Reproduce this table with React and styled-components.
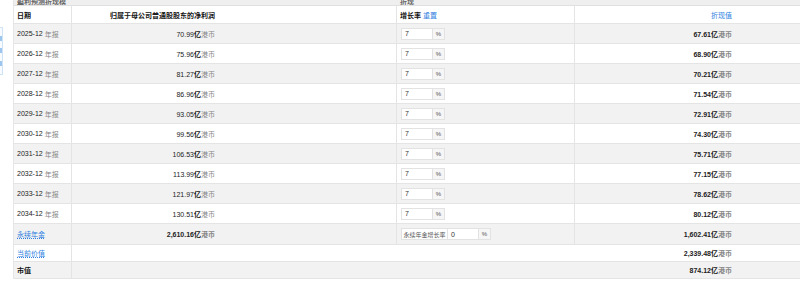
import React from "react";
import styled, { createGlobalStyle } from "styled-components";

const rows = [
  { date: "2025-12", net: "70.99", pv: "67.61" },
  { date: "2026-12", net: "75.96", pv: "68.90" },
  { date: "2027-12", net: "81.27", pv: "70.21" },
  { date: "2028-12", net: "86.96", pv: "71.54" },
  { date: "2029-12", net: "93.05", pv: "72.91" },
  { date: "2030-12", net: "99.56", pv: "74.30" },
  { date: "2031-12", net: "106.53", pv: "75.71" },
  { date: "2032-12", net: "113.99", pv: "77.15" },
  { date: "2033-12", net: "121.97", pv: "78.62" },
  { date: "2034-12", net: "130.51", pv: "80.12" },
];

const Global = createGlobalStyle`
  body {
    margin: 0;
    background: #fff;
    font-family: "Liberation Sans", Arial, "Noto Sans CJK SC", sans-serif;
    font-size: 7px;
    color: #333;
  }
`;

const Money = ({ value, bold }) => (
  <Amount $bold={bold}>
    {value}
    <b>亿</b>
    <Unit>港币</Unit>
  </Amount>
);

const Growth = ({ label, value }) => (
  <InputGroup>
    {label && <Addon $label>{label}</Addon>}
    <Field>{value}</Field>
    <Addon>%</Addon>
  </InputGroup>
);

const App = () => (
  <Page>
    <Global />
    <SideTab>
      <i />
      <i />
      <i />
    </SideTab>
    <Table>
      <TitleRow>
        <TitleText>盈利预测折现模型</TitleText>
        <span />
        <TitleText>折现</TitleText>
        <span />
      </TitleRow>

      <Row $h={18}>
        <Cell>
          <b>日期</b>
        </Cell>
        <Cell $align="right" $pr={181}>
          <b>归属于母公司普通股股东的净利润</b>
        </Cell>
        <Cell>
          <b>增长率</b>
          <Link>重置</Link>
        </Cell>
        <Cell $align="right" $pr={82} $last>
          <Link>折现值</Link>
        </Cell>
      </Row>

      {rows.map((r, i) => (
        <Row key={r.date} $gray={i % 2 === 0}>
          <Cell>
            {r.date}
            <Unit $gap>年报</Unit>
          </Cell>
          <Cell $align="right" $pr={181}>
            <Money value={r.net} />
          </Cell>
          <Cell>
            <Growth value="7" />
          </Cell>
          <Cell $align="right" $pr={82} $last>
            <Money value={r.pv} bold />
          </Cell>
        </Row>
      ))}

      <Row $gray $h={21}>
        <Cell>
          <Link $under>永续年金</Link>
        </Cell>
        <Cell $align="right" $pr={181}>
          <Money value="2,610.16" bold />
        </Cell>
        <Cell>
          <Growth label="永续年金增长率" value="0" />
        </Cell>
        <Cell $align="right" $pr={82} $last>
          <Money value="1,602.41" bold />
        </Cell>
      </Row>

      <Row $h={17} $wide>
        <Cell>
          <Link $under>当前价值</Link>
        </Cell>
        <Cell $align="right" $pr={82} $last>
          <Money value="2,339.48" bold />
        </Cell>
      </Row>

      <Row $gray $h={17} $wide>
        <Cell>
          <b>市值</b>
        </Cell>
        <Cell $align="right" $pr={82} $last>
          <Money value="874.12" bold />
        </Cell>
      </Row>
    </Table>
  </Page>
);

const Page = styled.div`
  position: relative;
  width: 800px;
  height: 282px;
  overflow: hidden;
  padding-left: 13px;
  box-sizing: border-box;
`;

const SideTab = styled.div`
  position: absolute;
  left: -4px;
  top: 27px;
  width: 7px;
  height: 48px;
  border: 1px solid #cfe3f5;
  background: #f7fbff;
  display: flex;
  flex-direction: column;
  justify-content: space-around;
  align-items: flex-end;
  padding: 4px 0;
  box-sizing: border-box;

  i {
    display: block;
    width: 2px;
    height: 5px;
    background: #9cc6ee;
  }
`;

const Table = styled.div`
  width: 800px;
  display: flex;
  flex-direction: column;
  border-left: 1px solid #e6e6e6;
`;

const Row = styled.div`
  display: grid;
  grid-template-columns: ${(p) => (p.$wide ? "58px 1fr" : "58px 325px 178px 1fr")};
  height: ${(p) => p.$h || 20}px;
  background: ${(p) => (p.$gray ? "#f2f2f2" : "#fff")};
  border-bottom: 1px solid #e4e4e4;
  box-sizing: border-box;
`;

const TitleRow = styled(Row)`
  height: 6px;
  background: #efefef;
  overflow: hidden;
  border-bottom: 1px solid #e0e0e0;
`;

const TitleText = styled.span`
  display: block;
  height: 5px;
  line-height: 4px;
  overflow: hidden;
  padding-left: 3px;
  font-weight: bold;
  color: #666;
`;

const Cell = styled.div`
  display: flex;
  align-items: center;
  justify-content: ${(p) => (p.$align === "right" ? "flex-end" : "flex-start")};
  padding: 0 ${(p) => p.$pr || 3}px 0 3px;
  border-right: ${(p) => (p.$last ? "none" : "1px solid #e4e4e4")};
  white-space: nowrap;
  color: #222;

  b {
    font-weight: bold;
    color: #111;
  }
`;

const Unit = styled.span`
  color: #888;
  margin-left: ${(p) => (p.$gap ? "2px" : "0")};
`;

const Amount = styled.span`
  font-weight: ${(p) => (p.$bold ? "bold" : "normal")};
  color: #222;

  b {
    font-weight: bold;
  }
`;

const Link = styled.a`
  color: #2f7fe0;
  margin-left: 2px;
  text-decoration: ${(p) => (p.$under ? "underline dotted" : "none")};
  cursor: pointer;

  &:first-child {
    margin-left: 0;
  }
`;

const InputGroup = styled.div`
  display: flex;
  height: 12px;
  margin-left: 1px;
`;

const Field = styled.div`
  width: 32px;
  height: 12px;
  box-sizing: border-box;
  border: 1px solid #e2e2e2;
  background: #fff;
  padding-left: 3px;
  display: flex;
  align-items: center;
  color: #333;
`;

const Addon = styled.div`
  width: ${(p) => (p.$label ? "46px" : "12px")};
  height: 12px;
  box-sizing: border-box;
  border: 1px solid #e2e2e2;
  border-left: none;
  background: ${(p) => (p.$label ? "#fff" : "#f6f6f6")};
  display: flex;
  align-items: center;
  justify-content: center;
  color: #555;
  font-size: 6px;

  &:first-child {
    border-left: 1px solid #e2e2e2;
    border-right: none;
  }
`;

export default App;
